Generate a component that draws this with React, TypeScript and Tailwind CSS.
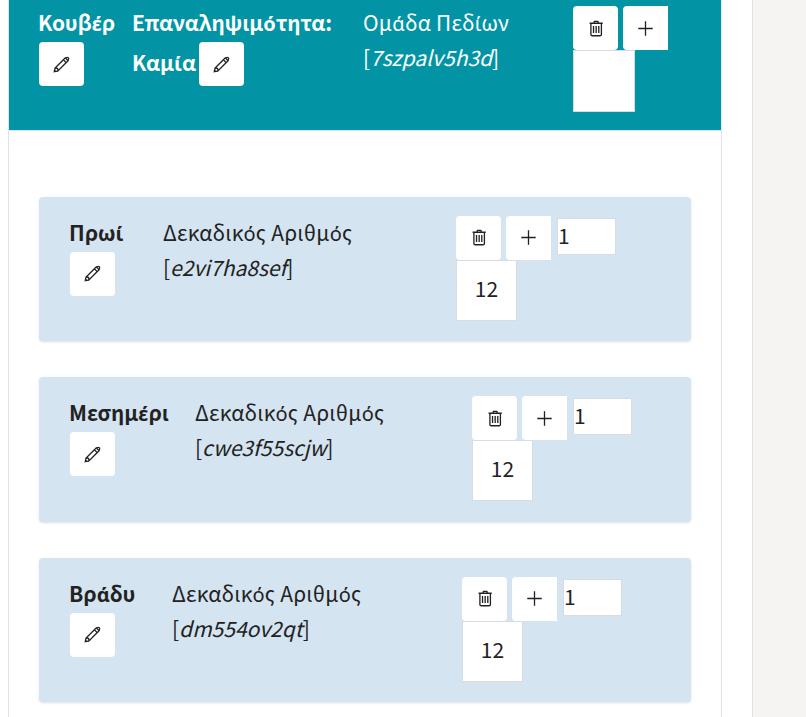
import { LiaPencilAltSolid, LiaPlusSolid, LiaTrashAltSolid } from 'react-icons/lia';

interface FieldRow {
  label: string;
  code: string;
  labelWidth: string;
  textWidth: string;
  cardMargin: string;
}

const rows: FieldRow[] = [
  { label: 'Πρωί', code: 'e2vi7ha8sef', labelWidth: 'w-[93px]', textWidth: 'w-[293px]', cardMargin: 'mt-[65.5px]' },
  { label: 'Μεσημέρι', code: 'cwe3f55scjw', labelWidth: 'w-[125px]', textWidth: 'w-[277px]', cardMargin: 'mt-[36px]' },
  { label: 'Βράδυ', code: 'dm554ov2qt', labelWidth: 'w-[102px]', textWidth: 'w-[290px]', cardMargin: 'mt-[36px]' },
];

// the CJK font puts the tonos in the wrong spot, so accented letters get their own font
function Greek({ text }: { text: string }) {
  return (
    <>
      {text.split(/([άέήίόύώ])/).map((part, i) =>
        i % 2 === 1 ? (
          <span key={i} className="font-['Noto_Sans'] text-[20px]">
            {part}
          </span>
        ) : (
          part
        ),
      )}
    </>
  );
}

function EditButton() {
  return (
    <button className="flex h-[44px] w-[45px] items-center justify-center rounded-[4px] bg-white text-[#222222]">
      <LiaPencilAltSolid size={21} />
    </button>
  );
}

function Actions() {
  return (
    <>
      <button className="mr-[5px] flex h-[44px] w-[45px] items-center justify-center rounded-[4px] bg-white text-[#222222]">
        <LiaTrashAltSolid size={21} />
      </button>
      <button className="mr-[6px] flex h-[44px] w-[45px] items-center justify-center rounded-l-[4px] bg-white text-[#222222]">
        <LiaPlusSolid size={21} />
      </button>
    </>
  );
}

function Card({ row }: { row: FieldRow }) {
  return (
    <div className={`${row.cardMargin} flex h-[144.5px] rounded-[4px] bg-[#d4e4f1] px-[31px] pt-[19px] shadow-sm`}>
      <div className={row.labelWidth}>
        <div className="mb-[4px] -ml-[1px] h-[32px] font-bold leading-[32px]">
          <Greek text={row.label} />
        </div>
        <EditButton />
      </div>
      <div className={row.textWidth}>
        <div className="mb-[4px] h-[32px] leading-[32px] tracking-[0.25px]">
          <Greek text="Δεκαδικός Αριθμός" />
        </div>
        <div className="h-[32px] leading-[30px]">
          [<em>{row.code}</em>]
        </div>
      </div>
      <div className="flex w-[165px] flex-wrap content-start items-start">
        <Actions />
        <div className="mt-[2px] h-[37px] w-[59px] border border-[#d5dce6] bg-white leading-[33px]">1</div>
        <div className="h-[61px] w-[61px] border border-[#d5dce6] bg-white text-center leading-[55px]">12</div>
      </div>
    </div>
  );
}

export default function App() {
  return (
    <div className="flex h-[717px] overflow-hidden bg-[#f5f4f2] font-['Noto_Sans_CJK_SC','Liberation_Sans',sans-serif] text-[21px] text-[#222222]">
      <div className="h-full w-[753px] border-r border-[#dde3ec] bg-white pl-[8px]">
        <div className="h-full w-[714px] border-x border-[#dde3ec]">
          <div className="flex h-[131px] border-b border-[#dde3ec] bg-[#0294a5] pl-[30px] pt-[6px] text-white">
            <div className="w-[94px]">
              <div className="mb-[4px] -ml-[1px] h-[32px] font-bold leading-[32px]">
                <Greek text="Κουβέρ" />
              </div>
              <EditButton />
            </div>
            <div className="w-[230px] font-bold">
              <div className="mb-[4px] -ml-[1px] h-[32px] leading-[32px]">
                <Greek text="Επαναληψιμότητα:" />
              </div>
              <div className="flex items-start gap-[3px]">
                <span className="-ml-[1px] mt-[4px] h-[32px] leading-[32px]">
                  <Greek text="Καμία" />
                </span>
                <EditButton />
              </div>
            </div>
            <div className="w-[210px]">
              <div className="mb-[4px] h-[32px] leading-[32px] tracking-[0.25px]">
                <Greek text="Ομάδα Πεδίων" />
              </div>
              <div className="h-[32px] leading-[30px]">
                [<em>7szpalv5h3d</em>]
              </div>
            </div>
            <div className="flex w-[102px] flex-wrap content-start items-start">
              <Actions />
              <div className="h-[62px] w-[62px] border border-[#d5dce6] bg-white" />
            </div>
          </div>
          <div className="px-[30px]">
            {rows.map((row) => (
              <Card key={row.code} row={row} />
            ))}
          </div>
        </div>
      </div>
    </div>
  );
}
